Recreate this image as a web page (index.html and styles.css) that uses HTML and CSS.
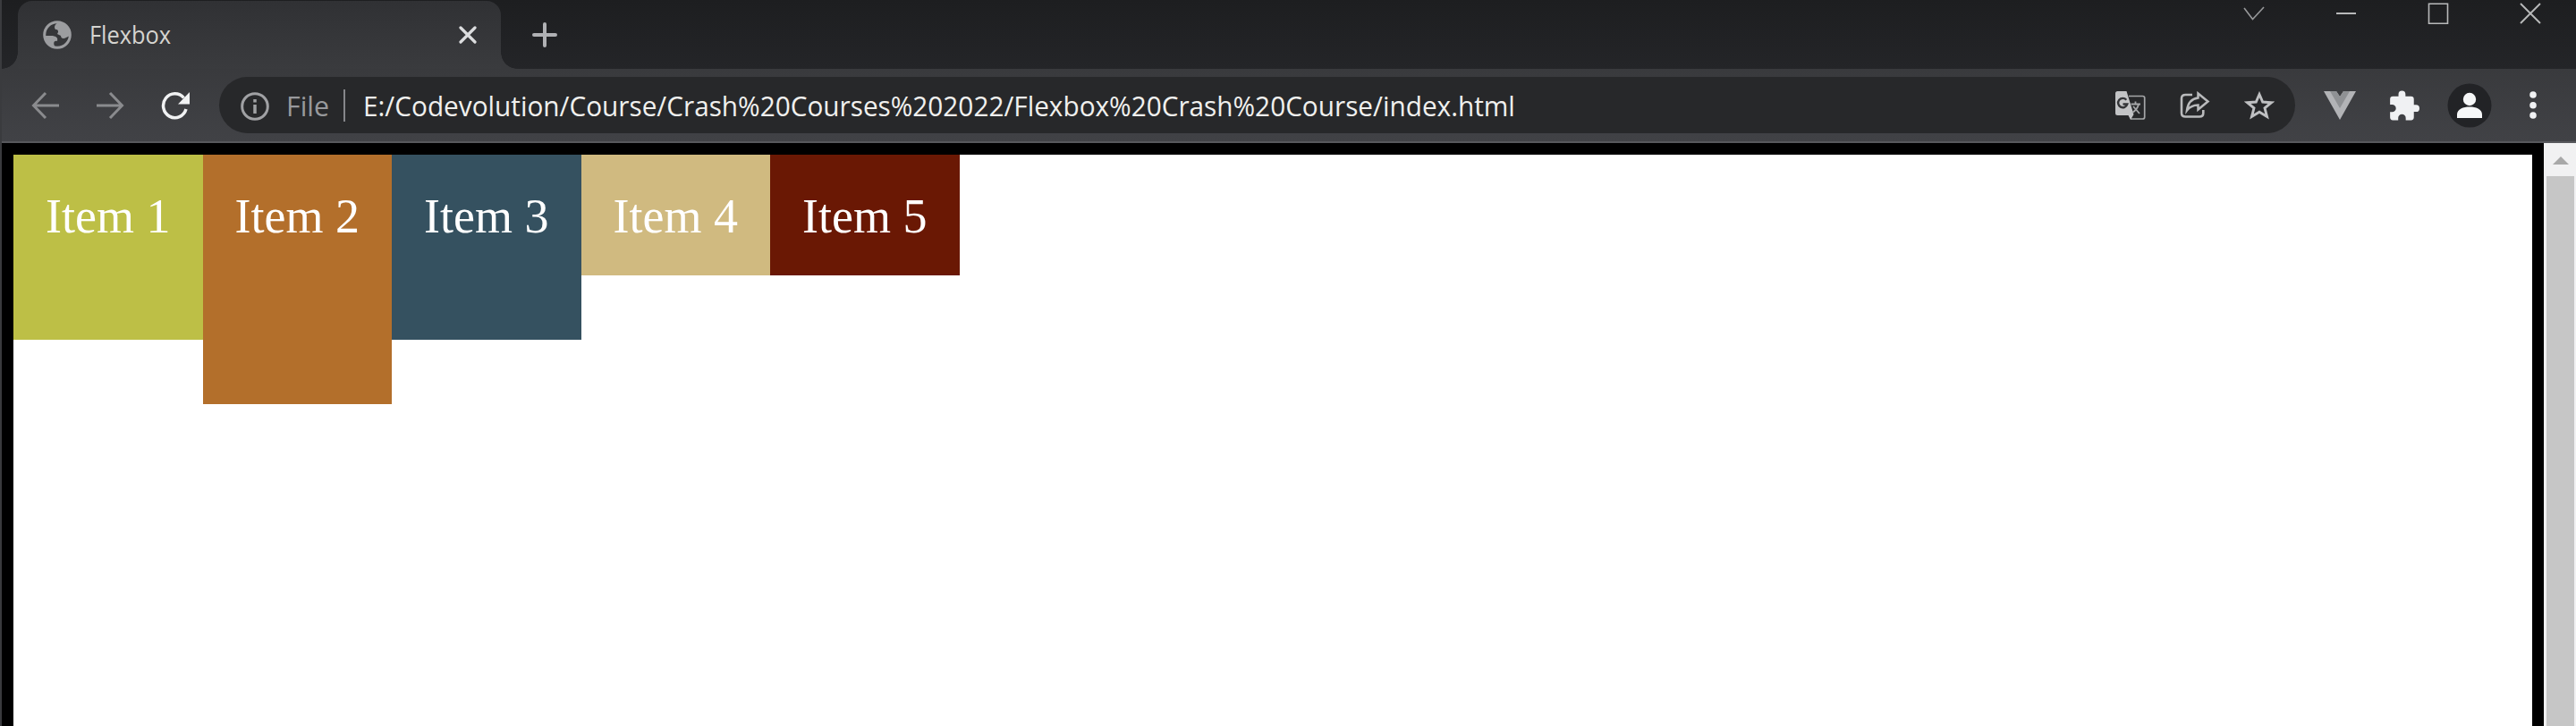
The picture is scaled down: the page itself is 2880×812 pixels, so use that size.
FILE: index.html
```html
<!DOCTYPE html>
<html lang="en">
<head>
<meta charset="utf-8">
<title>Flexbox</title>
<link rel="stylesheet" href="styles.css">
</head>
<body>
<div class="window">
  <header class="tabstrip">
    <div class="tab">
      <svg class="globe" viewBox="0 0 32 32"><circle cx="16" cy="16" r="14.3" fill="none" stroke="#9c9da0" stroke-width="3"/><path d="M17 2C13 5 12 7 14 10C17 10 18 12 16 15L20 17C20 20 23 21 26 19L30 17C31 9 25 2 17 2ZM2 17H11C15 18 17 19 16 23C12 22 11 26 14 30C7 29 2 24 2 17Z" fill="#9c9da0"/></svg>
      <span class="tab-title"><span class="fit">Flexbox</span></span>
      <svg class="tab-close" viewBox="0 0 20 20"><path d="M2 2L18 18M18 2L2 18" stroke="#dcdddf" stroke-width="3.2" stroke-linecap="round"/></svg>
    </div>
    <svg class="new-tab" viewBox="0 0 28 28"><path d="M14 2V26M2 14H26" stroke="#b0b1b4" stroke-width="4" stroke-linecap="round"/></svg>
    <div class="controls">
      <svg viewBox="0 0 24 24"><path d="M1 6L10.5 18.500L23 5" fill="none" stroke="#97989a" stroke-width="1.6"/></svg>
      <svg viewBox="0 0 24 24"><path d="M1 12H23" stroke="#b8b9ba" stroke-width="2"/></svg>
      <svg viewBox="0 0 24 24"><path d="M1.500 2H22.500V24H1.500Z" transform="translate(0 -.8)" fill="none" stroke="#b8b9ba" stroke-width="1.6"/></svg>
      <svg viewBox="0 0 24 24"><path d="M1 1L23 23M23 1L1 23" stroke="#b8b9ba" stroke-width="1.9"/></svg>
    </div>
  </header>

  <nav class="toolbar">
    <svg class="nav-icon back" viewBox="0 0 32 32"><path d="M31 16H3M16 2L2.500 16L16 30" fill="none" stroke="#8a8b8e" stroke-width="3"/></svg>
    <svg class="nav-icon forward" viewBox="0 0 32 32"><path d="M1 16H29M16 2L29.500 16L16 30" fill="none" stroke="#8a8b8e" stroke-width="3"/></svg>
    <svg class="nav-icon reload" viewBox="0 0 32 32"><path d="M28 20A13 13.500 0 1 1 25.500 7.500" fill="none" stroke="#f1f2f3" stroke-width="3.500"/><path d="M32 1V14.500H19Z" fill="#f1f2f3"/></svg>
    <div class="omnibox">
      <svg class="info" viewBox="0 0 32 32"><circle cx="16" cy="16" r="14.300" fill="none" stroke="#a0a1a4" stroke-width="3"/><path d="M16 14V24M16 8V11.500" stroke="#a0a1a4" stroke-width="3.500"/></svg>
      <span class="scheme"><span class="fit">File</span></span>
      <span class="divider"></span>
      <span class="url"><span class="fit">E:/Codevolution/Course/Crash%20Courses%202022/Flexbox%20Crash%20Course/index.html</span></span>
      <svg class="translate" viewBox="0 0 34 32"><path d="M15 5.500H30.500Q32.700 5.500 32.700 7.500V29Q32.700 31 30.500 31H17" fill="none" stroke="#a5a6a8" stroke-width="1.700"/><path d="M2.500 0H12.500L20.500 26L17 32L14.500 27H2.500Q0 27 0 24.500V2.500Q0 0 2.500 0Z" fill="#c3c4c6"/><path d="M12.300 9.700A5.200 5.200 0 1 0 13.300 14.500H8.500" fill="none" stroke="#343538" stroke-width="2.400"/><path d="M17.500 14.500H28M22.500 11.500V14.500M26 14.500C25 19 22 22 19 24M20 17L27 25" fill="none" stroke="#a5a6a8" stroke-width="1.800"/></svg>
      <svg class="share" viewBox="0 0 34 32"><path d="M14 4H6.500Q2 4 2 8V24.500Q2 28.500 6.500 28.500H22Q26.300 28.500 26.300 24.500V21" fill="none" stroke="#b9babc" stroke-width="2.600"/><path d="M20.500 2.500L31.500 11.500L20.500 20.500V15.500C14 15.500 11 17.500 8 21.500C9 13.500 12.500 8.500 20.500 7.500Z" fill="none" stroke="#b9babc" stroke-width="2.500"/></svg>
      <svg class="star" viewBox="0 0 34 32"><path d="M17 3.500L20.700 12L30.500 12.700L23 18.900L25.500 28.500L17 23.300L8.500 28.500L11 18.900L3.500 12.700L13.300 12Z" fill="none" stroke="#bfc0c2" stroke-width="2.900"/></svg>
    </div>
    <svg class="vue" viewBox="0 0 36 32"><path d="M0 0H14L18 6L22 0H36L18 32Z" fill="#b2b3b6"/><path d="M7 0H14L18 6L22 0H29L18 19Z" fill="#8f9194"/></svg>
    <svg class="puzzle" viewBox="0 0 23 23"><path d="M20.500 11H19V7a2 2 0 0 0-2-2H13V3.500a2.500 2.500 0 0 0-5 0V5H4a2 2 0 0 0-2 2v3.800h1.500a2.700 2.700 0 0 1 0 5.400H2V20a2 2 0 0 0 2 2h3.800v-1.500a2.700 2.700 0 0 1 5.400 0V22H17a2 2 0 0 0 2-2v-4h1.500a2.500 2.500 0 0 0 0-5Z" fill="#f0f1f3"/></svg>
    <svg class="avatar" viewBox="0 0 50 50"><circle cx="25" cy="25" r="24.500" fill="#222326"/><circle cx="25" cy="18" r="7.200" fill="#f6f7f8"/><path d="M11 39V35C11 29 18 26.500 25 26.500S39 29 39 35V39Z" fill="#f6f7f8"/></svg>
    <svg class="menu" viewBox="0 0 8 32"><circle cx="4" cy="4" r="3.800"/><circle cx="4" cy="15.700" r="3.800"/><circle cx="4" cy="27" r="3.800"/></svg>
  </nav>

  <main class="viewport">
    <div class="container">
      <div class="item item-1">Item 1</div>
      <div class="item item-2">Item 2</div>
      <div class="item item-3">Item 3</div>
      <div class="item item-4">Item 4</div>
      <div class="item item-5">Item 5</div>
    </div>
    <div class="scrollbar">
      <svg class="scroll-up" viewBox="0 0 18 9"><path d="M9 0L18 9H0Z" fill="#a8a8a8"/></svg>
      <div class="thumb"></div>
    </div>
  </main>
</div>
</body>
</html>
```
FILE: styles.css
```css
* { box-sizing: border-box; }
body { margin: 0; background: #000; }
svg { display: block; flex: none; }

.window {
  width: 2880px;
  height: 812px;
  overflow: hidden;
  display: flex;
  flex-direction: column;
  border-left: 2px solid #3a3b3e;
}

.tabstrip {
  height: 77px;
  flex: none;
  display: flex;
  align-items: flex-start;
  padding: 1px 39px 0 18px;
  background: linear-gradient(#1d1e20, #242528);
}
.tab {
  position: relative;
  width: 540px;
  height: 76px;
  display: flex;
  align-items: center;
  padding: 0 27px 0 28px;
  border-radius: 16px 16px 0 0;
  background: linear-gradient(#303134, #3a3b3e);
}
.tab::before,
.tab::after {
  content: "";
  position: absolute;
  bottom: 0;
  width: 18px;
  height: 18px;
}
.tab::before { left: -18px; background: radial-gradient(circle at 0 0, transparent 17.5px, #393a3d 18px); }
.tab::after { right: -18px; background: radial-gradient(circle at 100% 0, transparent 17.5px, #393a3d 18px); }
.globe { width: 32px; height: 32px; }

.fit { display: inline-block; transform-origin: 0 50%; white-space: nowrap; }
.tab-title {
  flex: 1;
  margin-left: 20px;
  font: 27px/36px "Open Sans", sans-serif;
  color: #d5d4d0;
}
.tab-title .fit { transform: scaleX(.94); }
.tab-close { width: 20px; height: 20px; }
.new-tab { width: 28px; height: 28px; margin: 24px 0 0 35px; }
.controls { display: flex; gap: 79px; margin: 2px 0 0 auto; }
.controls svg { width: 24px; height: 24px; }

.toolbar {
  height: 83px;
  flex: none;
  display: flex;
  align-items: center;
  padding: 0 44px 0 33px;
  border-bottom: 2px solid #57585c;
  background: linear-gradient(#393a3d, #414246);
}
.nav-icon { width: 32px; height: 32px; }
.forward { margin-left: 40px; }
.reload { margin-left: 41px; }
.omnibox {
  width: 2321px;
  height: 63px;
  margin-left: 33px;
  flex: none;
  display: flex;
  align-items: center;
  padding: 0 23px 0 24px;
  border-radius: 32px;
  background: #27282a;
  font: 31px/40px "Open Sans", sans-serif;
}
.info { width: 32px; height: 32px; margin-top: 2px; }
.scheme { width: 64px; margin-left: 19px; color: #98999c; }
.scheme .fit { transform: scaleX(.98); }
.divider { width: 2px; height: 36px; background: #85868a; }
.url { flex: 1; width: 0; margin-left: 20px; color: #f0f0ee; }
.url .fit { transform: scaleX(.9595); }
.translate { width: 34px; height: 32px; }
.share { width: 34px; height: 32px; margin-left: 38px; }
.star { width: 34px; height: 32px; margin-left: 38px; }
.vue { width: 36px; height: 32px; margin-left: 32px; }
.puzzle { width: 36px; height: 36px; margin-left: 35px; }
.avatar { width: 50px; height: 50px; margin-left: 31px; }
.menu { width: 8px; height: 32px; margin-left: auto; fill: #f0f1f3; }

.viewport { flex: 1; display: flex; }
.container {
  flex: 1;
  display: flex;
  align-items: flex-start;
  border: 13px solid #000;
  border-bottom: 0;
  background: #fff;
}
.item {
  width: 211.5px;
  padding: 38px 0 0 36px;
  height: 135px;
  font: 54px/63px "Liberation Serif", serif;
  color: #fff;
  white-space: nowrap;
}
.item-1 { height: 207px; background: #bdbf46; }
.item-2 { height: 279px; background: #b36f2b; }
.item-3 { height: 207px; background: #355160; }
.item-4 { background: #d0ba80; }
.item-5 { background: #6a1804; }

.scrollbar {
  width: 36px;
  display: flex;
  flex-direction: column;
  padding: 15px 2px 0 3px;
  background: #f1f1f2;
}
.scroll-up { width: 18px; height: 9px; margin-left: 7px; }
.thumb { flex: 1; margin-top: 13px; background: #c6c6c6; }
```
